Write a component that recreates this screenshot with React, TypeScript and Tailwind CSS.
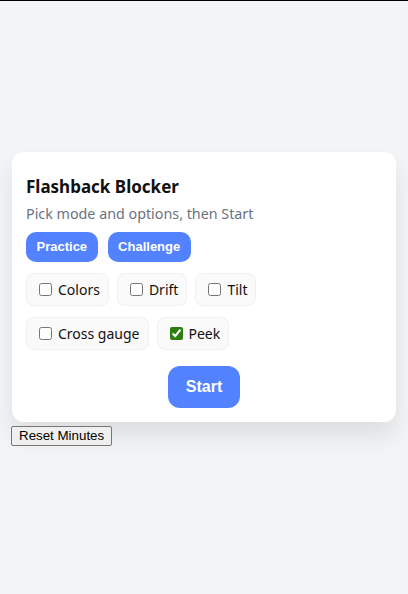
import { useState } from "react";

const pillStyle =
    "flex items-center gap-[6px] rounded-lg border border-[#eef0f3] bg-[#fafafa] pl-3 pr-2 h-[33px] text-[14px] text-[#111]";

const options = ["Colors", "Drift", "Tilt", "Cross gauge", "Peek"];

export default function App() {
    const [checked, setChecked] = useState<Record<string, boolean>>({ Peek: true });

    return (
        <div className="flex min-h-[594px] flex-col justify-center border-t border-black bg-[#f3f4f6] px-3 pt-[3px] font-['Noto_Sans',sans-serif]">
            <div className="rounded-xl bg-white px-[14px] pb-[14px] pt-[23px] shadow-[0_14px_24px_rgba(0,0,0,0.09)]">
                <h1 className="text-[17px] font-bold leading-6 text-[#111]">
                    Flashback Blocker
                </h1>
                <p className="mt-[5px] text-[14.3px] leading-5 text-[#6b7280]">
                    Pick mode and options, then Start
                </p>
                <div className="mt-[8px] flex gap-[10px]">
                    <button className="h-[30px] rounded-[10px] bg-[#5282ff] px-[10.5px] font-['Liberation_Sans',Arial,sans-serif] text-[13px] font-bold text-white">
                        Practice
                    </button>
                    <button className="h-[30px] rounded-[10px] bg-[#5282ff] px-[10.5px] font-['Liberation_Sans',Arial,sans-serif] text-[13px] font-bold text-white">
                        Challenge
                    </button>
                </div>
                <div className="mt-[11px] flex flex-wrap gap-x-2 gap-y-[11px]">
                    {options.map((o) => (
                        <label key={o} className={pillStyle}>
                            <input
                                type="checkbox"
                                className="h-[13px] w-[13px] accent-[#2e7d12]"
                                checked={!!checked[o]}
                                onChange={() =>
                                    setChecked({ ...checked, [o]: !checked[o] })
                                }
                            />
                            {o}
                        </label>
                    ))}
                </div>
                <div className="mt-4 flex justify-center">
                    <button className="h-[42px] w-[72px] rounded-xl bg-[#5282ff] font-['Liberation_Sans',Arial,sans-serif] text-[16px] font-bold text-white">
                        Start
                    </button>
                </div>
            </div>
            <div className="mt-1 flex">
                <button className="-ml-px rounded-[2px] border border-[#767676] bg-[#efefef] px-[7px] py-[1px] font-['Liberation_Sans',Arial,sans-serif] text-[13.33px] leading-4 text-black">
                    Reset Minutes
                </button>
            </div>
        </div>
    );
}
